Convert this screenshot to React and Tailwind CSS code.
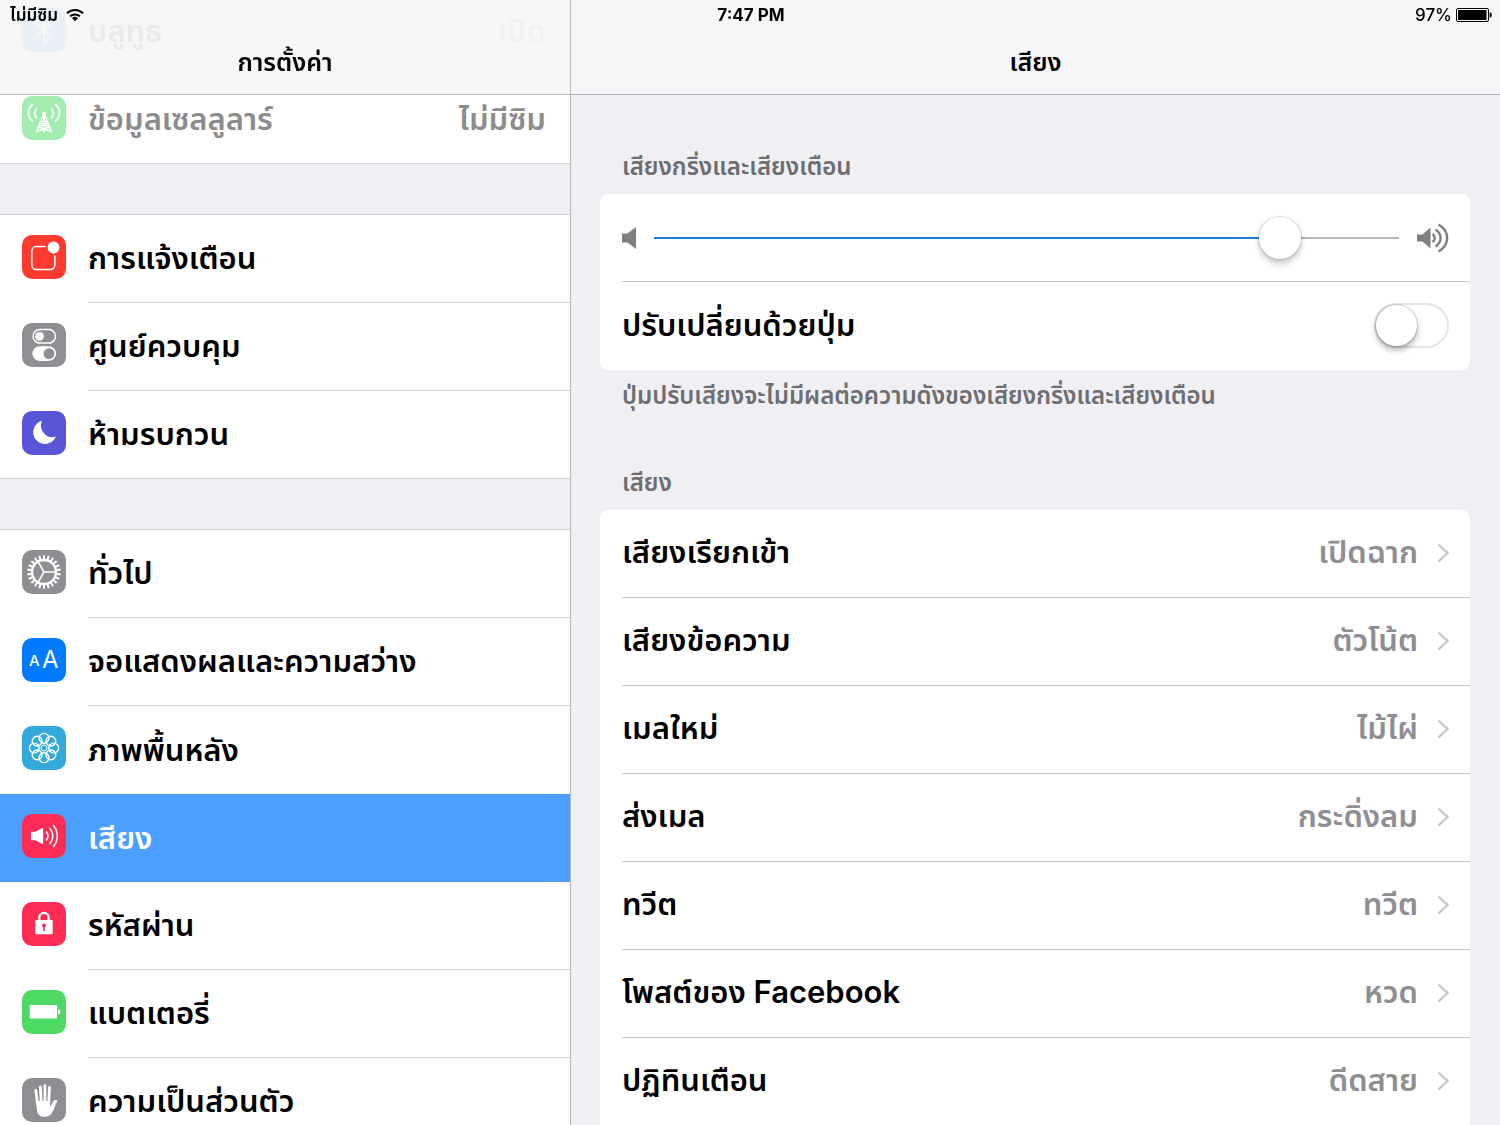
import { useState } from "react";

const teeth = Array.from({ length: 22 }, (_, i) => (i * 360) / 22);
const petals = [0, 45, 90, 135, 180, 225, 270, 315];

const glyphs = {
  bluetooth: (
    <path d="M14 15.5 29 28.5 22 35V9l7 6.5L14 28.5" fill="none" stroke="#fff" strokeWidth="2" />
  ),
  cellular: (
    <g fill="none" stroke="#fff" strokeWidth="1.7" strokeLinecap="round">
      <path d="M22 17 14.5 36M22 17l7.5 19M22 17v19M19.500 25.500h5M16.800 31l10.700 4M27.200 31l-10.700 4M18.500 27l7 3M25.500 27l-7 3" strokeWidth="1.5" />
      <circle cx="22" cy="17.5" r="1" fill="#fff" />
      <path d="M14.500 12.500c-2.400 2.600-2.400 6.600 0 9.200M29.500 12.500c2.400 2.600 2.400 6.600 0 9.200" />
      <path d="M10.500 8.500c-5.400 4.800-5.400 11.900 0 16.700M33.500 8.500c5.400 4.800 5.400 11.900 0 16.700" />
    </g>
  ),
  notifications: (
    <>
      <rect x="9.800" y="11.500" width="23" height="23" rx="4.500" fill="none" stroke="#fff" strokeWidth="1.500" />
      <circle cx="31.500" cy="12.500" r="8" fill="#ff3b30" />
      <circle cx="31.500" cy="12.500" r="5.900" fill="#fff" />
    </>
  ),
  control: (
    <>
      <rect x="11" y="6.600" width="22.500" height="13.500" rx="6.750" fill="none" stroke="#fff" strokeWidth="1.500" />
      <circle cx="17.500" cy="13.300" r="4.400" fill="#fff" />
      <rect x="10.300" y="23.300" width="23.800" height="14.600" rx="7.300" fill="#fff" />
      <circle cx="27" cy="30.600" r="5.400" fill="#8e8e93" />
    </>
  ),
  moon: <path d="M20 9.800A11.800 11.800 0 1 0 34 25.500 11.500 11.500 0 0 1 20 9.800z" fill="#fff" />,
  gear: (
    <g stroke="#fff" fill="none">
      <circle cx="22" cy="22" r="12" strokeWidth="2.400" />
      {teeth.map((a) => (
        <path key={a} d="M22 9.500V5.200" strokeWidth="2" transform={`rotate(${a} 22 22)`} />
      ))}
      <path d="M22 22h12M22 22l-6-10.400M22 22l-6 10.400" strokeWidth="1.600" />
    </g>
  ),
  display: (
    <g fill="#fff" className="font-['Inter']">
      <text x="7" y="28" fontSize="15" fontWeight="500">A</text>
      <text x="20" y="30" fontSize="24" fontWeight="400">A</text>
    </g>
  ),
  flower: (
    <g fill="none" stroke="#fff" strokeWidth="1.400">
      {petals.map((a) => (
        <circle key={a} cx="22" cy="12.300" r="4.900" transform={`rotate(${a} 22 22)`} />
      ))}
      <circle cx="22" cy="22" r="3" strokeWidth="1" />
    </g>
  ),
  sound: (
    <>
      <path d="M9 17.800h4.500l7.700-4.400v17.200l-7.700-4.400H9z" fill="#fff" />
      <g fill="none" stroke="#fff" strokeWidth="1.600" strokeLinecap="round">
        <path d="M24.500 18c1.800 2.500 1.800 5.500 0 8M28 14.500c3.400 4.600 3.400 10.400 0 15M31.500 11.500c5 6.200 5 14.800 0 21" />
      </g>
    </>
  ),
  lock: (
    <>
      <path d="M17.300 19v-3.500a4.700 4.700 0 0 1 9.400 0V19" fill="none" stroke="#fff" strokeWidth="2.200" />
      <rect x="13.300" y="18" width="17.400" height="14.300" rx="1" fill="#fff" />
      <circle cx="22" cy="23.500" r="1.900" fill="#ff2d55" />
      <path d="M22 24v5" stroke="#ff2d55" strokeWidth="1.600" />
    </>
  ),
  battery: (
    <>
      <rect x="7.700" y="15" width="27.300" height="13.400" rx="1" fill="#fff" />
      <path d="M36.500 19.500a2.600 2.600 0 0 1 0 4.600z" fill="#fff" stroke="#fff" />
    </>
  ),
  hand: (
    <>
      <g stroke="#fff" strokeWidth="2.800" strokeLinecap="round" fill="none">
        <path d="M13.800 12.500 15.500 26M18.300 9l.9 15M22.900 7.700V24M27.500 9.500 26.700 25" />
      </g>
      <path d="M14 23h14v5.500c1.500-1.300 2.400-4.600 4-6 1-.8 3.200-.6 3.400.6-1.600 2.800-3 7.800-5 11.200-1.700 3-4 4.500-7.600 4.500-4.500 0-7-2-7.800-6z" fill="#fff" />
    </>
  ),
};

const groups = [
  [
    { label: "บลูทูธ", value: "เปิด", icon: "bluetooth", color: "bg-[#007aff]" },
    { label: "ข้อมูลเซลลูลาร์", value: "ไม่มีซิม", icon: "cellular", color: "bg-[#4cd964]", disabled: true },
  ],
  [
    { label: "การแจ้งเตือน", icon: "notifications", color: "bg-[#ff3b30]" },
    { label: "ศูนย์ควบคุม", icon: "control", color: "bg-[#8e8e93]" },
    { label: "ห้ามรบกวน", icon: "moon", color: "bg-[#5856d6]" },
  ],
  [
    { label: "ทั่วไป", icon: "gear", color: "bg-[#8e8e93]" },
    { label: "จอแสดงผลและความสว่าง", icon: "display", color: "bg-[#007aff]" },
    { label: "ภาพพื้นหลัง", icon: "flower", color: "bg-[#34aadc]" },
    { label: "เสียง", icon: "sound", color: "bg-[#ff2d55]" },
    { label: "รหัสผ่าน", icon: "lock", color: "bg-[#ff2d55]" },
    { label: "แบตเตอรี่", icon: "battery", color: "bg-[#4cd964]" },
    { label: "ความเป็นส่วนตัว", icon: "hand", color: "bg-[#8e8e93]" },
  ],
];

const sounds = [
  ["เสียงเรียกเข้า", "เปิดฉาก"],
  ["เสียงข้อความ", "ตัวโน้ต"],
  ["เมลใหม่", "ไม้ไผ่"],
  ["ส่งเมล", "กระดิ่งลม"],
  ["ทวีต", "ทวีต"],
  ["โพสต์ของ Facebook", "หวด"],
  ["ปฏิทินเตือน", "ดีดสาย"],
];

function SettingRow({ item, active, last, hideLine, onSelect }) {
  return (
    <li>
      <button
        type="button"
        disabled={item.disabled}
        onClick={onSelect}
        className={`flex h-[88px] w-full items-center gap-[22px] pl-[22px] text-left ${
          active ? "bg-[#4c9fff] text-white" : "bg-white text-black"
        } ${last ? "border-b border-[#d2d2d6]" : ""}`}
      >
        <span
          className={`mb-1 size-11 shrink-0 overflow-hidden rounded-[10px] ${item.color} ${
            item.disabled ? "opacity-50" : ""
          }`}
        >
          <svg viewBox="0 0 44 44" className="size-11" aria-hidden="true">
            {glyphs[item.icon]}
          </svg>
        </span>
        <span
          className={`flex h-full flex-1 items-center justify-between pr-6 ${
            hideLine ? "" : "border-b border-[#d4d4d7]"
          } ${item.disabled ? "text-[#8c8c8c]" : ""}`}
        >
          <span>{item.label}</span>
          {item.value && <span className="text-[#8c8c8c]">{item.value}</span>}
        </span>
      </button>
    </li>
  );
}

function StatusBar() {
  return (
    <div className="absolute inset-x-0 top-0 z-20 grid h-[30px] grid-cols-3 items-center pr-2 pl-[10px] text-[17px] leading-6">
      <div className="flex items-center gap-2">
        <span>ไม่มีซิม</span>
        <svg viewBox="0 0 18 14" className="h-[14px] w-[18px]" aria-hidden="true">
          <path d="M1 5.200a11.500 11.500 0 0 1 16 0M4 8.400a7.200 7.200 0 0 1 10 0" fill="none" stroke="#000" strokeWidth="2" />
          <path d="M9 13.200 6 10.300a4.300 4.300 0 0 1 6 0z" />
        </svg>
      </div>
      <div className="text-center font-bold">7:47 PM</div>
      <div className="flex items-center justify-end gap-1 font-medium">
        <span>97%</span>
        <svg viewBox="0 0 36 14" className="h-[14px] w-9" aria-hidden="true">
          <rect x="0.500" y="0.500" width="32" height="13" rx="1.500" fill="none" stroke="#000" />
          <rect x="2" y="2" width="28.500" height="10" />
          <path d="M34 4.500c2 .8 2 4.200 0 5z" stroke="#000" strokeWidth="0.600" />
        </svg>
      </div>
    </div>
  );
}

export default function App() {
  const [selected, setSelected] = useState("เสียง");
  const [volume, setVolume] = useState(86);
  const [withButtons, setWithButtons] = useState(false);

  return (
    <div className="relative flex h-screen overflow-hidden bg-[#efeff4] font-['Inter','Noto_Sans_Thai','Loma',sans-serif] text-[31px] font-semibold text-black">
      <StatusBar />

      <aside className="w-[38%] shrink-0 overflow-hidden">
        <header className="sticky top-0 z-10 flex h-[95px] items-end justify-center border-b border-[#b9b9bb] bg-[#f7f7f7]/95 pb-4">
          <h1 className="text-[25px] leading-8">การตั้งค่า</h1>
        </header>
        <nav className="-mt-[108px] space-y-[50px]">
          {groups.map((items, i) => (
            <ul key={i} className="border-t border-[#d2d2d6]">
              {items.map((item, j) => (
                <SettingRow
                  key={item.label}
                  item={item}
                  active={item.label === selected}
                  last={j === items.length - 1}
                  // the highlighted row has no hairline above or below it
                  hideLine={
                    j === items.length - 1 ||
                    item.label === selected ||
                    items[j + 1].label === selected
                  }
                  onSelect={() => setSelected(item.label)}
                />
              ))}
            </ul>
          ))}
        </nav>
      </aside>

      <main className="flex-1 overflow-hidden border-l border-[#b5b5ba]">
        <header className="flex h-[95px] items-end justify-center border-b border-[#b2b2b6] bg-[#f6f6f8] pb-4">
          <h2 className="text-[25px] leading-8">เสียง</h2>
        </header>

        <div className="pt-[56px] pr-[30px] pl-[29px]">
          <h3 className="px-[22px] text-[24px] leading-8 text-[#6d6d72]">เสียงกริ่งและเสียงเตือน</h3>
          <div className="mt-[11px] rounded-lg bg-white pl-[22px]">
            <div className="flex h-[88px] items-center border-b border-[#c8c7cc] pr-[21px]">
              <svg viewBox="0 0 14 22" className="h-[22px] w-[14px]" aria-hidden="true">
                <path d="M0 6.500h5.500L14 0v22l-8.500-6.500H0z" fill="#7f7f7f" />
              </svg>
              <input
                type="range"
                min="0"
                max="100"
                value={volume}
                onChange={(e) => setVolume(Number(e.target.value))}
                aria-label="ระดับเสียง"
                style={{
                  backgroundImage: `linear-gradient(to right, #1f7fe0 ${volume}%, #b7b7b7 ${volume}%)`,
                }}
                className="mx-[18px] h-[42px] flex-1 appearance-none bg-size-[100%_2px] bg-center bg-no-repeat [&::-webkit-slider-thumb]:size-[42px] [&::-webkit-slider-thumb]:appearance-none [&::-webkit-slider-thumb]:rounded-full [&::-webkit-slider-thumb]:bg-white [&::-webkit-slider-thumb]:shadow-[0_0_1px_1px_rgba(0,0,0,0.12),0_4px_6px_rgba(0,0,0,0.25)]"
              />
              <svg viewBox="0 0 32 30" className="h-[30px] w-8" aria-hidden="true">
                <path d="M0 11.500h5.500L13.500 4.500v21l-8-7H0z" fill="#7f7f7f" />
                <path d="M15.500 11c3 2.200 3 5.800 0 8M18.500 6.500c6.800 4.500 6.800 12.500 0 17M21.500 1.500c11.500 6.500 11.500 20.500 0 27" fill="none" stroke="#7f7f7f" strokeWidth="2.400" />
              </svg>
            </div>
            <label className="flex h-[88px] items-center justify-between pr-[21px] pb-0.5">
              <span>ปรับเปลี่ยนด้วยปุ่ม</span>
              <input
                type="checkbox"
                role="switch"
                checked={withButtons}
                onChange={(e) => setWithButtons(e.target.checked)}
                className="h-[45px] w-[75px] appearance-none rounded-full border-2 border-[#e5e5e5] bg-white before:block before:size-[41px] before:rounded-full before:bg-white before:shadow-[0_0_1px_1px_rgba(0,0,0,0.15),0_4px_6px_rgba(0,0,0,0.3)] checked:border-[#4cd964] checked:bg-[#4cd964] checked:before:ml-[30px]"
              />
            </label>
          </div>
          <p className="mt-[10px] px-[22px] text-[24px] leading-8 text-[#6d6d72]">
            ปุ่มปรับเสียงจะไม่มีผลต่อความดังของเสียงกริ่งและเสียงเตือน
          </p>

          <h3 className="mt-[55px] px-[22px] text-[24px] leading-8 text-[#6d6d72]">เสียง</h3>
          <ul className="mt-[11px] rounded-t-lg bg-white pl-[22px]">
            {sounds.map(([name, tone]) => (
              <li key={name} className="border-b border-[#c8c7cc]">
                <button type="button" className="flex h-[87px] w-full items-center pr-[21px] pb-0.5 text-left">
                  <span className="flex-1">{name}</span>
                  <span className="text-[#8e8e93]">{tone}</span>
                  <svg viewBox="0 0 12 20" className="ml-[19px] h-5 w-3" aria-hidden="true">
                    <path d="m1.500 1.500 9 8.500-9 8.500" fill="none" stroke="#c7c7cc" strokeWidth="2.400" />
                  </svg>
                </button>
              </li>
            ))}
          </ul>
        </div>
      </main>
    </div>
  );
}
